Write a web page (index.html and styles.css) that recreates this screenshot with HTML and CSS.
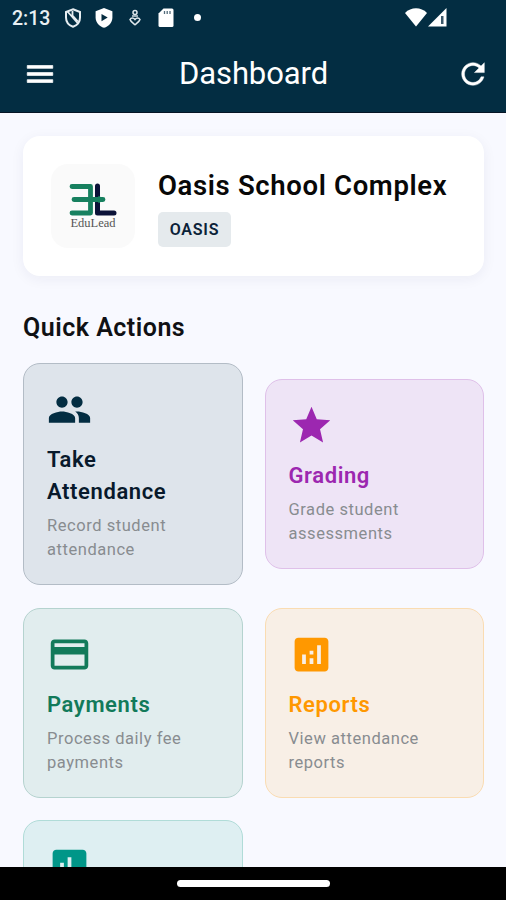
FILE: index.html
```html
<!DOCTYPE html>
<html lang="en">
<head>
  <meta charset="UTF-8" />
  <meta name="viewport" content="width=device-width, initial-scale=1.0" />
  <title>Dashboard</title>
  <link rel="stylesheet" href="styles.css">
</head>
<body>
  <header class="header">
    <div class="status-bar">
      <span class="time">2:13</span>
      <svg class="status-shield" width="18" height="20" viewBox="0 0 18 20">
        <path d="M9 1.300 L16 4 V9.500 C16 14 13 17.300 9 18.700 C5 17.300 2 14 2 9.500 V4 Z" fill="none" stroke="#e6edf1" stroke-width="2"/>
        <path d="M3.500 3.500 L14 15.500 M8.500 3 V7.500 L14 13.500" fill="none" stroke="#e6edf1" stroke-width="1.800"/>
      </svg>
      <svg class="status-play" width="18" height="20" viewBox="0 0 18 20">
        <path d="M9 0 L17.400 3.200 V9.500 C17.400 14.500 13.800 18.400 9 19.800 C4.200 18.400 .6 14.500 .6 9.500 V3.200 Z" fill="#fff"/>
        <path d="M6.500 6 L12.700 9.600 L6.500 13.200 Z" fill="#052c40"/>
      </svg>
      <svg class="status-care" width="12" height="18" viewBox="0 0 12 18">
        <circle cx="6" cy="3.400" r="2" fill="none" stroke="#dfe8ec" stroke-width="1.500"/>
        <path d="M3 7 H9" stroke="#dfe8ec" stroke-width="1.400"/>
        <path d="M1 10.500 C2 8.500 4.500 8.500 6 10.500 C7.500 8.500 10 8.500 11 10.500 C10.500 12.500 8 14 6 15.700 C4 14 1.500 12.500 1 10.500 Z" fill="none" stroke="#dfe8ec" stroke-width="1.500"/>
      </svg>
      <svg class="status-sd" width="16" height="20" viewBox="0 0 16 20">
        <path d="M5.500 .5 H14 Q15.500 .5 15.500 2 V17.500 Q15.500 19 14 19 H2 Q.5 19 .5 17.500 V5.500 Z" fill="#fff"/>
        <path d="M6.500 3 V6 M9.200 3 V6 M12 3 V6" stroke="#526b7a" stroke-width="1.300"/>
      </svg>
      <span class="status-dot"></span>
      <svg class="status-wifi" width="22" height="19" viewBox="0 0 22 19">
        <path d="M0 5 C6 -1.200 16 -1.200 22 5 L11 18.500 Z" fill="#fff"/>
      </svg>
      <svg class="status-signal" width="19" height="19" viewBox="0 0 19 19">
        <path d="M0 18.500 L18.500 0 V18.500 Z" fill="#fff"/>
        <path d="M13 8 H15.500 V16 H13 Z" fill="#3b5769"/>
      </svg>
    </div>
    <div class="app-bar">
      <svg class="menu-icon" width="34" height="34" viewBox="0 0 24 24" fill="#fff">
        <path d="M3 18h18v-2H3v2zm0-5h18v-2H3v2zm0-7v2h18V6H3z" stroke="#fff" stroke-width=".5"/>
      </svg>
      <h1>Dashboard</h1>
      <svg class="refresh-icon" width="34" height="34" viewBox="0 0 24 24" fill="#fff">
        <path d="M17.650 6.350C16.200 4.900 14.210 4 12 4c-4.420 0-7.990 3.580-7.990 8s3.570 8 7.990 8c3.730 0 6.840-2.550 7.730-6h-2.080c-.82 2.330-3.040 4-5.650 4-3.310 0-6-2.690-6-6s2.690-6 6-6c1.660 0 3.140.69 4.220 1.780L13 11h7V4l-2.350 2.350z" stroke="#fff" stroke-width=".3"/>
      </svg>
    </div>
  </header>

  <main class="content">
    <section class="school-card">
      <div class="logo">
        <svg width="48" height="35" viewBox="0 0 48 35" fill="none" stroke-linecap="round" stroke-linejoin="round">
          <path d="M28.500 4 V31 H45" stroke="#0b1238" stroke-width="5"/>
          <path d="M3 4.500 H21.500 V31 H3 M5 17.500 H34" stroke="#17805f" stroke-width="4.800"/>
          <path d="M30 14.500 L35 17.500 L30 20.500 Z" fill="#17805f" stroke="#17805f"/>
        </svg>
        <span class="logo-text">EduLead</span>
      </div>
      <div class="school-info">
        <h2>Oasis School Complex</h2>
        <span class="school-code">OASIS</span>
      </div>
    </section>

    <h3 class="section-title">Quick Actions</h3>

    <div class="actions">
      <div class="action attendance">
        <svg width="45" height="45" viewBox="0 0 24 24" fill="currentColor">
          <path d="M16 11c1.660 0 2.990-1.340 2.990-3S17.660 5 16 5c-1.660 0-3 1.340-3 3s1.340 3 3 3zm-8 0c1.660 0 2.990-1.340 2.990-3S9.660 5 8 5C6.340 5 5 6.340 5 8s1.340 3 3 3zm0 2c-2.330 0-7 1.170-7 3.500V19h14v-2.500c0-2.330-4.670-3.500-7-3.500zm8 0c-.29 0-.62.02-.97.050 1.160.84 1.970 1.970 1.970 3.450V19h6v-2.500c0-2.330-4.670-3.500-7-3.500z"/>
        </svg>
        <h4>Take Attendance</h4>
        <p>Record student attendance</p>
      </div>
      <div class="action grading">
        <svg width="45" height="45" viewBox="0 0 24 24" fill="currentColor">
          <path d="M12 17.270L18.180 21l-1.640-7.030L22 9.240l-7.190-.61L12 2 9.190 8.630 2 9.240l5.460 4.730L5.820 21z"/>
        </svg>
        <h4>Grading</h4>
        <p>Grade student assessments</p>
      </div>
      <div class="action payments">
        <svg width="45" height="45" viewBox="0 0 24 24" fill="currentColor">
          <path d="M20 4H4c-1.110 0-1.990.89-1.990 2L2 18c0 1.110.89 2 2 2h16c1.110 0 2-.89 2-2V6c0-1.110-.89-2-2-2zm0 14H4v-6h16v6zm0-10H4V6h16v2z"/>
        </svg>
        <h4>Payments</h4>
        <p>Process daily fee payments</p>
      </div>
      <div class="action reports">
        <svg width="45" height="45" viewBox="0 0 24 24" fill="currentColor">
          <path d="M19 3H5c-1.100 0-2 .9-2 2v14c0 1.100.9 2 2 2h14c1.100 0 2-.9 2-2V5c0-1.100-.9-2-2-2zM9 17H7v-5h2v5zm4 0h-2v-3h2v3zm0-5h-2v-2h2v2zm4 5h-2V7h2v10z"/>
        </svg>
        <h4>Reports</h4>
        <p>View attendance reports</p>
      </div>
      <div class="action statistics">
        <svg width="45" height="45" viewBox="0 0 24 24" fill="currentColor">
          <path d="M19 3H5c-1.100 0-2 .9-2 2v14c0 1.100.9 2 2 2h14c1.100 0 2-.9 2-2V5c0-1.100-.9-2-2-2zM9 17H7v-7h2v7zm4 0h-2V7h2v10zm4 0h-2v-4h2v4z"/>
        </svg>
      </div>
    </div>
  </main>

  <footer class="nav-bar">
    <div class="nav-handle"></div>
  </footer>
</body>
</html>
```

FILE: styles.css
```css
* {
  box-sizing: border-box;
}
body {
  margin: 0;
  height: 900px;
  display: flex;
  flex-direction: column;
  overflow: hidden;
  font-family: Roboto, sans-serif;
  background: #f8f9ff;
}
h1, h2, h3, h4, p {
  margin: 0;
}
svg {
  display: block;
  flex: none;
}
.header {
  flex: none;
  height: 113px;
  background: #032d42;
  border-bottom: 1px solid #061525;
  color: white;
}
.status-bar {
  display: flex;
  align-items: center;
  height: 35px;
  padding-left: 12px;
}
.time {
  width: 39px;
  font-size: 19.5px;
  line-height: 35px;
  font-weight: 500;
  color: #e9f0f3;
  padding-top: 2px;
}
.status-shield {
  margin-left: 13px;
}
.status-play {
  margin-left: 13px;
}
.status-care {
  margin-left: 16px;
}
.status-sd {
  margin-left: 17px;
}
.status-dot {
  width: 7px;
  height: 7px;
  margin-left: 20px;
  border-radius: 50%;
  background: white;
}
.status-wifi {
  margin-left: 204px;
}
.status-signal {
  margin-left: 1px;
}
.app-bar {
  display: flex;
  align-items: center;
  justify-content: space-between;
  height: 77px;
  padding: 0 16px 0 23px;
}
.app-bar h1 {
  font-size: 31px;
  font-weight: 400;
  line-height: 40px;
  letter-spacing: -0.1px;
  padding-right: 6px;
}
.content {
  flex: 1;
  min-height: 0;
  overflow: hidden;
  padding: 23px 22px 0 23px;
}
.school-card {
  display: flex;
  align-items: center;
  height: 140px;
  padding: 0 28px;
  background: white;
  border-radius: 17px;
  box-shadow: 0 3px 14px rgba(30, 40, 80, 0.06);
}
.logo {
  display: flex;
  flex-direction: column;
  align-items: center;
  width: 84px;
  height: 84px;
  padding-top: 18px;
  background: #fafafa;
  border-radius: 17px;
}
.logo-text {
  font-family: "Liberation Serif", serif;
  font-size: 12.5px;
  line-height: 12px;
  color: #555;
}
.school-info {
  margin-left: 23px;
  padding-top: 1px;
}
.school-info h2 {
  font-size: 27.5px;
  line-height: 37px;
  font-weight: 600;
  letter-spacing: 0.65px;
  color: #080808;
  white-space: nowrap;
}
.school-code {
  display: block;
  width: 73px;
  height: 35px;
  margin-top: 8px;
  border-radius: 5px;
  background: #e5eaed;
  color: #0b2238;
  font-size: 16px;
  line-height: 36px;
  font-weight: 600;
  letter-spacing: 0.8px;
  text-align: center;
}
.section-title {
  margin-top: 35px;
  font-size: 25px;
  line-height: 34px;
  font-weight: 600;
  letter-spacing: 0.5px;
  color: #101114;
}
.actions {
  display: grid;
  grid-template-columns: 1fr 1fr;
  gap: 22.5px 22px;
  align-items: center;
  margin-top: 18px;
}
.action {
  padding: 23px 23px 22px;
  border: 1px solid;
  border-radius: 17px;
}
.action h4 {
  margin-top: 12px;
  font-size: 22px;
  line-height: 32px;
  font-weight: 600;
  letter-spacing: 0.6px;
}
.action p {
  margin-top: 6px;
  font-size: 16.5px;
  line-height: 24px;
  letter-spacing: 0.55px;
  color: #888c90;
}
.attendance {
  background: #dee4eb;
  border-color: #b3bcc6;
}
.attendance svg {
  color: #032d42;
}
.attendance h4 {
  color: #08192b;
}
.grading {
  background: #eee4f6;
  border-color: #dfc0e9;
}
.grading svg, .grading h4 {
  color: #9c27b0;
}
.payments {
  background: #e1edee;
  border-color: #b5d3cf;
}
.payments svg, .payments h4 {
  color: #127a5a;
}
.reports {
  background: #f8efe6;
  border-color: #fadcb2;
}
.reports svg, .reports h4 {
  color: #ff9800;
}
.statistics {
  height: 190px;
  background: #deeff2;
  border-color: #b0dcd8;
  color: #009688;
}
.nav-bar {
  flex: none;
  display: flex;
  justify-content: center;
  height: 33px;
  padding-top: 13px;
  background: black;
}
.nav-handle {
  width: 153px;
  height: 7px;
  border-radius: 4px;
  background: white;
}
```
